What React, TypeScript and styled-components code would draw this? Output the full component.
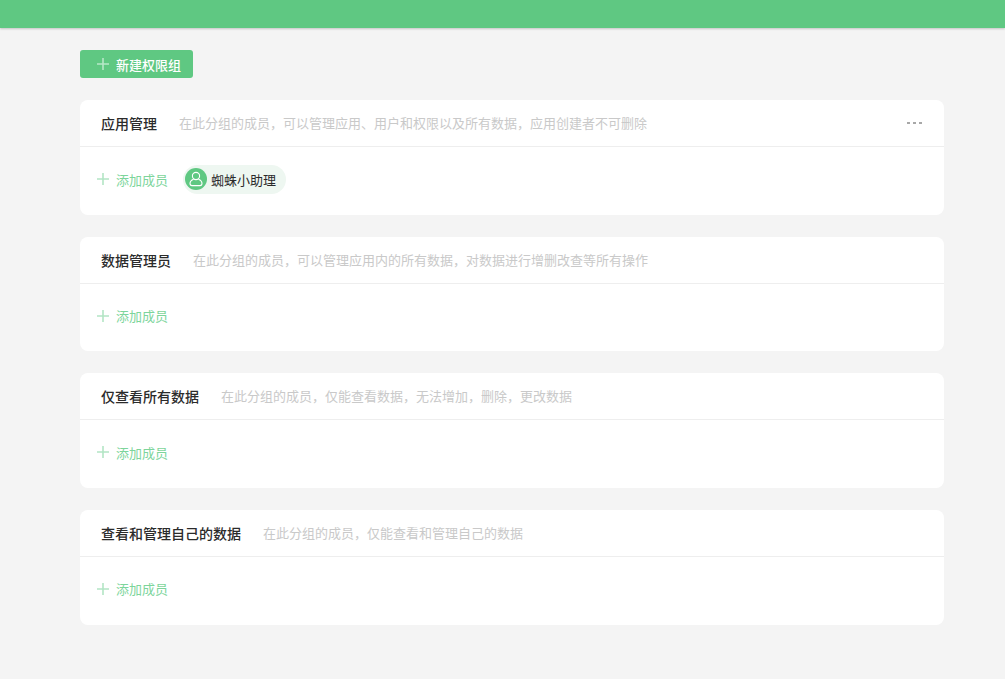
import React from 'react'
import styled, { createGlobalStyle } from 'styled-components'

const GlobalStyle = createGlobalStyle`
  html, body {
    margin: 0;
    padding: 0;
    background: #f4f4f4;
    font-family: "Microsoft YaHei", "Noto Sans CJK SC", "Liberation Sans", sans-serif;
  }
  * {
    box-sizing: border-box;
  }
`

const Page = styled.div`
  height: 679px;
  overflow: hidden;
  background: #f4f4f4;
`

const TopBar = styled.div`
  height: 28px;
  background: #5fc882;
  box-shadow: 0 1px 2px rgba(0, 0, 0, 0.2);
`

const Content = styled.div`
  width: 864px;
  margin-left: 80px;
  padding-top: 22px;
`

const NewButton = styled.button`
  display: flex;
  align-items: center;
  width: 113px;
  height: 28px;
  padding: 0 0 0 17px;
  border: 0;
  border-radius: 3px;
  background: #5fc882;
  color: #fff;
  font: inherit;
  font-size: 13px;
  font-weight: 500;
  gap: 7px;
`

const Card = styled.section`
  height: 114.67px;
  margin-top: 22px;
  border-radius: 8px;
  background: #fff;
`

const CardHeader = styled.div`
  display: flex;
  align-items: center;
  height: 47px;
  padding: 0 22px 0 21px;
  border-bottom: 1px solid #eeeeee;
`

const Title = styled.h3`
  margin: 0 22px 0 0;
  color: #2b2b2b;
  font-size: 14px;
  font-weight: 500;
  line-height: 46px;
`

const Description = styled.span`
  flex: 1;
  color: #c9c9c9;
  font-size: 13px;
  line-height: 46px;
`

const MoreDots = styled.div`
  display: flex;
  gap: 3px;
  margin-top: -1px;
  
  i {
    display: block;
    width: 3px;
    height: 2px;
    background: #a8a8a8;
  }
`

const Members = styled.div`
  display: flex;
  align-items: center;
  height: 38px;
  margin-top: 13px;
  padding-left: 17px;
`

const AddMember = styled.div`
  display: flex;
  align-items: center;
  gap: 7px;
  color: #7dd59b;
  font-size: 13px;
`

const MemberChip = styled.div`
  display: flex;
  align-items: center;
  height: 29px;
  margin-left: 15px;
  padding: 0 10px 0 2px;
  border-radius: 15px;
  background: #eef7f1;
  color: #2b2b2b;
  font-size: 13px;
  gap: 4px;
`

const Avatar = styled.div`
  display: flex;
  align-items: center;
  justify-content: center;
  width: 22px;
  height: 22px;
  border-radius: 50%;
  background: #5fc882;
`

const PlusIcon = ({ color }: { color: string }) => (
  <svg width="12" height="12" viewBox="0 0 12 12" fill="none">
    <path d="M6 0v12M0 6h12" stroke={color} strokeWidth="1.6" />
  </svg>
)

const UserIcon = () => (
  <svg width="14" height="16" viewBox="0 0 14 16" fill="none" stroke="#fff" strokeWidth="1.1">
    <circle cx="7" cy="5" r="3.6" />
    <path d="M4.6 8.2C2.4 9 1 10.6 1 12.6c0 1.4.7 2 2 2h8c1.300 0 2-.6 2-2 0-2-1.400-3.600-3.600-4.400" />
  </svg>
)

interface Group {
  title: string
  description: string
  more?: boolean
  members?: string[]
}

const groups: Group[] = [
  {
    title: '应用管理',
    description: '在此分组的成员，可以管理应用、用户和权限以及所有数据，应用创建者不可删除',
    more: true,
    members: ['蜘蛛小助理'],
  },
  {
    title: '数据管理员',
    description: '在此分组的成员，可以管理应用内的所有数据，对数据进行增删改查等所有操作',
  },
  {
    title: '仅查看所有数据',
    description: '在此分组的成员，仅能查看数据，无法增加，删除，更改数据',
  },
  {
    title: '查看和管理自己的数据',
    description: '在此分组的成员，仅能查看和管理自己的数据',
  },
]

export default function App() {
  return (
    <Page>
      <GlobalStyle />
      <TopBar />
      <Content>
        <NewButton>
          <PlusIcon color="#b7e7c8" />
          新建权限组
        </NewButton>
        {groups.map((group) => (
          <Card key={group.title}>
            <CardHeader>
              <Title>{group.title}</Title>
              <Description>{group.description}</Description>
              {group.more && (
                <MoreDots>
                  <i />
                  <i />
                  <i />
                </MoreDots>
              )}
            </CardHeader>
            <Members>
              <AddMember>
                <PlusIcon color="#b3e5c5" />
                添加成员
              </AddMember>
              {group.members?.map((name) => (
                <MemberChip key={name}>
                  <Avatar>
                    <UserIcon />
                  </Avatar>
                  {name}
                </MemberChip>
              ))}
            </Members>
          </Card>
        ))}
      </Content>
    </Page>
  )
}
